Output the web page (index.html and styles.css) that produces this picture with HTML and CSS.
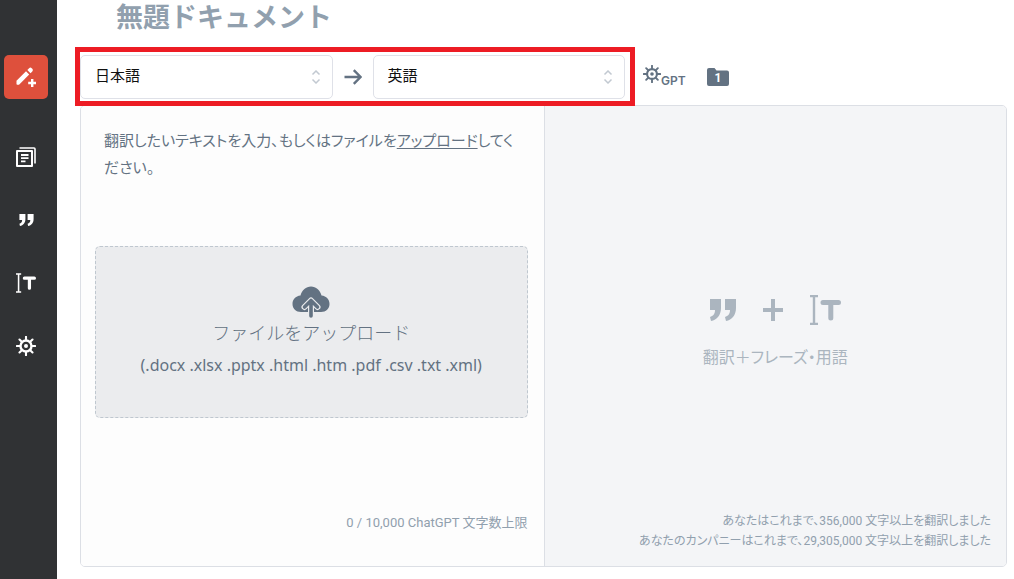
FILE: index.html
```html
<!DOCTYPE html>
<html lang="ja">
<head>
<meta charset="utf-8">
<meta name="viewport" content="width=device-width, initial-scale=1">
<title>無題ドキュメント</title>
<link rel="stylesheet" href="styles.css">
</head>
<body>
<svg class="defs" aria-hidden="true">
  <symbol id="gear" viewBox="0 0 20 20">
    <circle cx="10" cy="10" r="5.5" fill="none" stroke="currentColor" stroke-width="2.4"/>
    <circle cx="10" cy="10" r="2" fill="currentColor"/>
    <path d="M10 0.8V4M10 16v3.2M0.8 10H4M16 10h3.2M3.5 3.5l2.3 2.3M14.2 14.2l2.3 2.3M16.5 3.5l-2.3 2.3M5.8 14.2l-2.3 2.3" stroke="currentColor" stroke-width="2.1" stroke-linecap="round"/>
  </symbol>
  <symbol id="quotes" viewBox="0 0 26 22">
    <path d="M0 0h11v9c0 7-4 12-10 13L0 18c3-1 5-3 5-7H0zM15 0h11v9c0 7-4 12-10 13l-1-4c3-1 5-3 5-7h-5z" fill="currentColor"/>
  </symbol>
  <symbol id="term" viewBox="0 0 31 30">
    <path d="M0 1h8M4 1v28M0 29h8" fill="none" stroke="currentColor" stroke-width="2.4"/>
    <path d="M13 7.500h15.500M20.800 8v15" fill="none" stroke="currentColor" stroke-width="5" stroke-linecap="round"/>
  </symbol>
  <symbol id="updown" viewBox="0 0 10 14">
    <path d="M1.500 4.500L5 1l3.500 3.500M1.500 9.500L5 13l3.500-3.500" fill="none" stroke="currentColor" stroke-width="1.500"/>
  </symbol>
</svg>
<div class="app">
  <nav class="sidebar" aria-label="メニュー">
    <button class="nav-button nav-button-active" type="button" aria-label="新規作成">
      <svg width="20" height="20" viewBox="0 0 20 20"><path d="M0.500 15.500v1.500q0 .7.700.7H3L13.200 7.500 10 4.300.500 13.800z" fill="#fff"/><path d="M11.300 3l1.800-1.800q1.300-1.200 2.600 0l.6.600q1.300 1.300 0 2.600L14.500 6.200z" fill="#fff"/><path d="M16.200 12v8M12.200 16h8" stroke="#fff" stroke-width="2.400"/></svg>
    </button>
    <button class="nav-button" type="button" aria-label="ドキュメント">
      <svg width="20" height="20" viewBox="0 0 20 20"><path d="M1 4h15v15H1z" fill="none" stroke="currentColor" stroke-width="2" stroke-linejoin="round"/><path d="M3.500 1H18q1 0 1 1v14.500" fill="none" stroke="currentColor" stroke-width="1.600"/><path d="M5 8h7.500M5 11.200h7.500M5 14.400h4.500" stroke="currentColor" stroke-width="1.800"/></svg>
    </button>
    <button class="nav-button" type="button" aria-label="フレーズ">
      <svg width="15" height="12"><use href="#quotes"/></svg>
    </button>
    <button class="nav-button" type="button" aria-label="用語">
      <svg width="20" height="20"><use href="#term"/></svg>
    </button>
    <button class="nav-button" type="button" aria-label="設定">
      <svg width="20" height="20"><use href="#gear"/></svg>
    </button>
  </nav>
  <main class="content">
    <h1 class="title">無題ドキュメント</h1>
    <div class="toolbar">
      <div class="languages">
        <div class="picker">
          <select class="picker-select" aria-label="翻訳元の言語"><option>日本語</option></select>
          <svg class="picker-icon" width="10" height="14"><use href="#updown"/></svg>
        </div>
        <svg class="arrow" width="18" height="16" viewBox="0 0 18 16"><path d="M.5 8H16M9.800 1.200L16.600 8l-6.800 6.800" fill="none" stroke="currentColor" stroke-width="2.400"/></svg>
        <div class="picker">
          <select class="picker-select" aria-label="翻訳先の言語"><option>英語</option></select>
          <svg class="picker-icon" width="10" height="14"><use href="#updown"/></svg>
        </div>
      </div>
      <button class="tool gpt" type="button"><svg width="18" height="18"><use href="#gear"/></svg><span class="gpt-label">GPT</span></button>
      <button class="tool folder" type="button" aria-label="フォルダー 1">
        <svg width="22" height="20" viewBox="0 0 22 20"><path d="M0 3q0-2 2-2h5.500l2 2.500H20q2 0 2 2V17q0 2-2 2H2q-2 0-2-2z" fill="currentColor"/><text class="folder-count" x="11" y="15" text-anchor="middle">1</text></svg>
      </button>
    </div>
    <div class="panels">
      <section class="source">
        <p class="prompt">翻訳したいテキストを入力、もしくはファイルを<a class="upload-link" href="#upload">アップロード</a>してください。</p>
        <button class="dropzone" id="upload" type="button">
          <svg width="38" height="32" viewBox="0 0 38 32"><path d="M9 26C4 26 .5 22.500 .5 18c0-4.500 3-8 8-8.500C10 4 14 .5 19 .5S28 4 29.500 9.500c5 .5 8 4 8 8.500S34 26 29 26z" fill="currentColor"/><path d="M19 29V15M12.500 21l6.500-6.500 6.500 6.500" fill="none" stroke="#ebecee" stroke-width="6" stroke-linecap="round" stroke-linejoin="round"/><path d="M19 30V15M12.500 21l6.500-6.500 6.500 6.500" fill="none" stroke="currentColor" stroke-width="3.600" stroke-linecap="round" stroke-linejoin="round"/></svg>
          <span class="dropzone-title">ファイルをアップロード</span>
          <span class="dropzone-types">(.docx .xlsx .pptx .html .htm .pdf .csv .txt .xml)</span>
        </button>
        <p class="note">0 / 10,000 ChatGPT 文字数上限</p>
      </section>
      <section class="result">
        <div class="empty">
          <div class="empty-icons">
            <svg width="26" height="22"><use href="#quotes"/></svg>
            <svg width="20" height="22" viewBox="0 0 20 22"><path d="M10 0v22M0 11h20" stroke="currentColor" stroke-width="4"/></svg>
            <svg width="31" height="30"><use href="#term"/></svg>
          </div>
          <p class="empty-text">翻訳＋フレーズ・用語</p>
        </div>
        <p class="note stats">あなたはこれまで、356,000 文字以上を翻訳しました<br>あなたのカンパニーはこれまで、29,305,000 文字以上を翻訳しました</p>
      </section>
    </div>
  </main>
</div>
</body>
</html>
```
FILE: styles.css
```css
* { box-sizing: border-box; }

body {
  margin: 0;
  background: #fff;
  color: #637282;
  font-family: Roboto, "Noto Sans CJK JP", sans-serif;
  font-feature-settings: "palt";
}

h1, p { margin: 0; }

button {
  border: 0;
  padding: 0;
  background: none;
  color: inherit;
  font: inherit;
  font-feature-settings: inherit;
  cursor: pointer;
}

svg { display: block; flex: none; }

.defs { position: absolute; width: 0; height: 0; }

.app { display: flex; min-height: 100vh; }

.sidebar {
  flex: none;
  display: flex;
  flex-direction: column;
  gap: 19px;
  width: 57px;
  padding: 55px 4px 0;
  background: #303234;
  color: #fff;
}

.nav-button {
  display: grid;
  place-items: center;
  width: 44px;
  height: 44px;
  border-radius: 5px;
}

.nav-button-active { margin-bottom: 17px; background: #de503c; }

.content {
  flex: 1;
  display: flex;
  flex-direction: column;
  min-width: 0;
  padding: 0 7px 12px 18px;
}

.title {
  height: 47px;
  padding-left: 41px;
  color: #91a0ae;
  font-size: 27px;
  font-weight: 700;
  font-feature-settings: normal;
  line-height: 36px;
}

.toolbar { display: flex; align-items: center; }

.languages {
  position: relative;
  flex: 0 1 560px;
  display: flex;
  align-items: center;
  gap: 11px;
  min-width: 0;
  padding: 3px 5px 2px 0;
  border: 5px solid #ed1c24;
}

.picker { position: relative; flex: 1; min-width: 0; }

.picker-select {
  display: block;
  appearance: none;
  width: 100%;
  height: 44px;
  padding: 0 32px 3px 14px;
  border: 1px solid #dfe1e8;
  border-radius: 5px;
  background: #fff;
  color: #111;
  font-family: inherit;
  font-size: 15px;
}

.picker-icon {
  position: absolute;
  top: 15px;
  right: 12px;
  color: #c2c9d1;
  pointer-events: none;
}

.arrow { color: #637282; }

.tool { flex: none; display: flex; }

.gpt { margin-left: 8px; }

.gpt-label {
  padding-top: 8px;
  font-family: Inter, sans-serif;
  font-size: 12px;
  font-weight: 600;
  line-height: 16px;
}

.folder { margin-left: 21px; }

.folder-count {
  fill: #fff;
  font-size: 12px;
  font-weight: 700;
}

.panels {
  flex: 1;
  display: grid;
  grid-template-columns: calc(50% + 1px) 1fr;
  margin: -1px 0 0 5px;
  border: 1px solid #dcdfe5;
  border-radius: 5px;
  overflow: hidden;
}

.source, .result { display: flex; flex-direction: column; min-width: 0; }

.source {
  padding: 22px 16px 33px 14px;
  border-right: 1px solid #dcdfe5;
  background: #fdfdfd;
}

.prompt {
  min-height: 118px;
  padding-left: 9px;
  font-size: 15px;
  line-height: 27px;
}

.upload-link { color: inherit; text-underline-offset: 2px; }

.dropzone {
  display: flex;
  flex-direction: column;
  align-items: center;
  padding: 39px 8px 37px;
  border: 1px dashed #bfc7cf;
  border-radius: 5px;
  background: #ebecee;
}

.dropzone-title {
  font-size: 18px;
  font-weight: 300;
  font-feature-settings: normal;
  line-height: 32px;
}

.dropzone-types {
  font-family: "Noto Sans", sans-serif;
  font-size: 16px;
  line-height: 30px;
}

.note {
  margin-top: auto;
  color: #91a0ae;
  font-size: 13px;
  line-height: 20px;
  text-align: right;
}

.stats { font-size: 12px; }

.result { padding: 0 15px 15px; background: #f4f5f7; color: #abb5bf; }

.empty {
  display: flex;
  flex-direction: column;
  align-items: center;
  gap: 19px;
  padding-top: 189px;
}

.empty-icons { display: flex; align-items: center; gap: 27px; }

.empty-text { font-size: 16px; line-height: 28px; }
```
